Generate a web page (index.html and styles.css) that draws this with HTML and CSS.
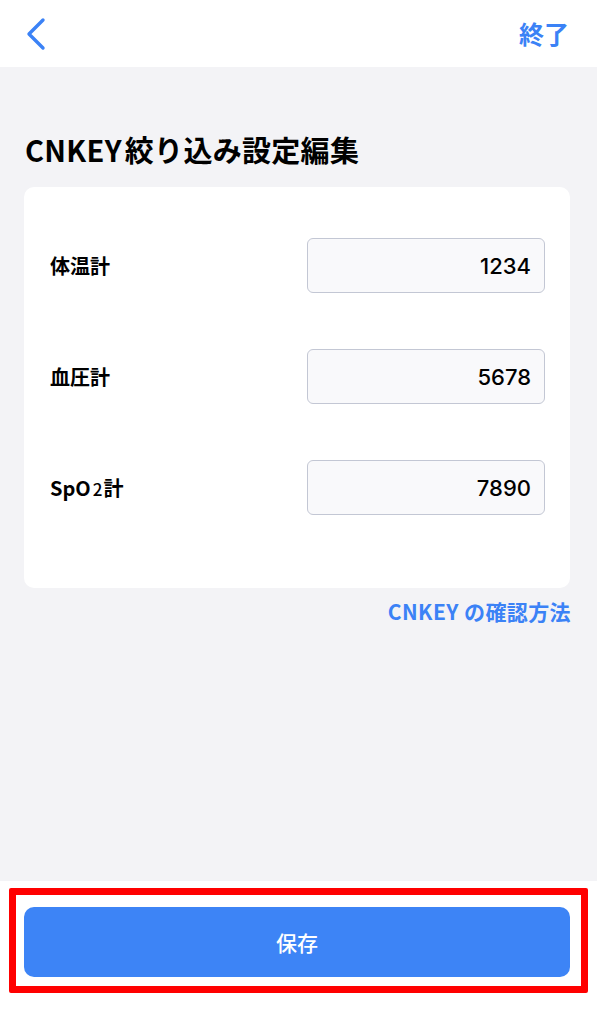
FILE: index.html
```html
<!DOCTYPE html>
<html lang="ja">
	<head>
		<meta charset="UTF-8">
		<title>CNKEY絞り込み設定編集</title>
		<link rel="stylesheet" href="styles.css">
	</head>
	<body>
		<div class="page">
			<header class="nav">
				<a class="nav_back" href="#">
					<svg width="24" height="34" viewBox="0 0 24 34">
						<path d="M19 3 L5 17 L19 31" fill="none" stroke="#3b82f6" stroke-width="3.4" stroke-linecap="round" stroke-linejoin="round"/>
					</svg>
				</a>
				<a class="nav_done" href="#">終了</a>
			</header>
			<main class="content">
				<h1 class="title">CNKEY<span class="title_jp">絞り込み設定編集</span></h1>
				<div class="card">
					<div class="row">
						<span class="row_label">体温計</span>
						<input class="row_input" type="text" value="1234">
					</div>
					<div class="row">
						<span class="row_label">血圧計</span>
						<input class="row_input" type="text" value="5678">
					</div>
					<div class="row">
						<span class="row_label">SpO<small>2</small>計</span>
						<input class="row_input" type="text" value="7890">
					</div>
				</div>
				<div class="help">
					<a href="#">CNKEY の確認方法</a>
				</div>
			</main>
			<footer class="footer">
				<div class="highlight">
					<button class="save_btn" type="button">保存</button>
				</div>
			</footer>
		</div>
	</body>
</html>
```

FILE: styles.css
```css
*{
	box-sizing: border-box;
}
body{
	margin: 0;
	font-family: "Noto Sans CJK JP", "Noto Sans", sans-serif;
	color: #111;
	background: #fff;
}
a{
	text-decoration: none;
}
.page{
	display: flex;
	flex-direction: column;
	height: 1024px;
}
.nav{
	height: 67px;
	background: #fff;
	display: flex;
	align-items: center;
	justify-content: space-between;
	padding: 0 28px 0 24px;
}
.nav_back{
	display: flex;
}
.nav_done{
	color: #3b82f6;
	font-size: 25px;
	font-weight: 700;
	line-height: 1;
}
.content{
	flex: 1;
	background: #f3f3f6;
	padding: 0 27px 0 24px;
}
.title{
	margin: 63px 0 19px 1px;
	font-size: 29px;
	line-height: 38px;
	font-weight: 700;
	letter-spacing: 0.3px;
	color: #000;
}
.title_jp{
	margin-left: 3px;
}
.card{
	background: #fff;
	border-radius: 10px;
	padding: 51px 25px 73px 26px;
	display: flex;
	flex-direction: column;
	gap: 56px;
}
.row{
	display: flex;
	align-items: center;
	justify-content: space-between;
	height: 55px;
}
.row_label{
	font-size: 20px;
	font-weight: 700;
	color: #000;
}
.row_label small{
	font-size: 17px;
	font-weight: 500;
	margin: 0 1px 0 2px;
}
.row_input{
	width: 238px;
	height: 55px;
	border: 1.5px solid #c3c7d4;
	border-radius: 6px;
	background: #f9f9fb;
	text-align: right;
	padding: 0 13px 0 10px;
	font-family: "Inter", "Noto Sans", sans-serif;
	font-size: 22px;
	font-weight: 500;
	color: #000;
	outline: none;
}
.help{
	text-align: right;
	margin-top: 8px;
	margin-right: -1px;
}
.help a{
	color: #3b82f6;
	font-size: 21px;
	font-weight: 700;
	letter-spacing: 0.4px;
	line-height: 30px;
}
.footer{
	height: 143px;
	background: #fff;
	padding-top: 7px;
}
.highlight{
	margin: 0 9px;
	border: 7px solid #ff0000;
	border-radius: 2px;
	padding: 12px 11px 9px 8px;
}
.save_btn{
	display: block;
	width: 100%;
	height: 70px;
	border: none;
	border-radius: 10px;
	background: #3d84f6;
	color: #fff;
	font-family: "Noto Sans CJK JP", sans-serif;
	font-size: 21px;
	font-weight: 500;
	cursor: pointer;
}
```
